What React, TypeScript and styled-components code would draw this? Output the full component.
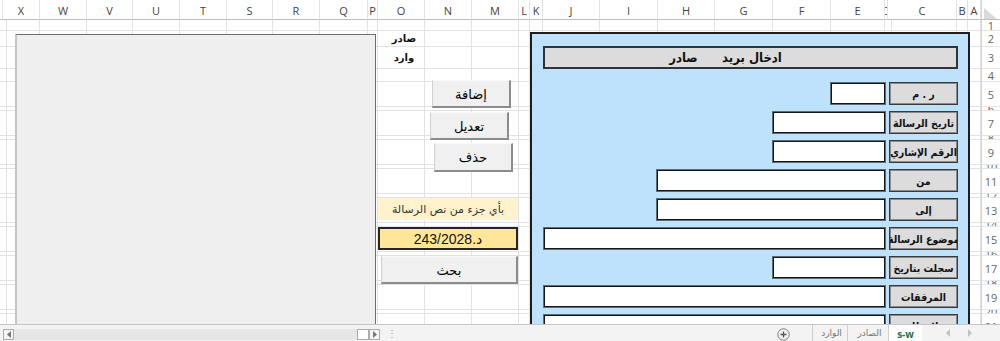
import styled, { createGlobalStyle } from "styled-components";

type Col = { name: string; w: number };

// Columns as they appear left to right (right-to-left sheet)
const COLS: Col[] = [
	{ name: "", w: 3 },
	{ name: "X", w: 37 },
	{ name: "W", w: 47 },
	{ name: "V", w: 46 },
	{ name: "U", w: 47 },
	{ name: "T", w: 47 },
	{ name: "S", w: 46 },
	{ name: "R", w: 47 },
	{ name: "Q", w: 48 },
	{ name: "P", w: 10 },
	{ name: "O", w: 47 },
	{ name: "N", w: 47 },
	{ name: "M", w: 47 },
	{ name: "L", w: 11 },
	{ name: "K", w: 13 },
	{ name: "J", w: 57 },
	{ name: "I", w: 58 },
	{ name: "H", w: 57 },
	{ name: "G", w: 58 },
	{ name: "F", w: 58 },
	{ name: "E", w: 54 },
	{ name: "D", w: 3 },
	{ name: "C", w: 69 },
	{ name: "B", w: 11 },
	{ name: "A", w: 13 },
];

const ROWS = [11, 16, 22, 13, 25, 4, 25, 4, 25, 4, 25, 4, 25, 4, 25, 4, 25, 4, 25, 4, 25];

const CELLS: Record<string, string> = {
	O2: "صادر",
	O3: "وارد",
};

const FIELDS = [
	{ label: "ر . م", w: 56 },
	{ label: "تاريخ الرسالة", w: 114 },
	{ label: "الرقم الإشاري", w: 114 },
	{ label: "من", w: 230 },
	{ label: "إلى", w: 230 },
	{ label: "موضوع الرسالة", w: 344 },
	{ label: "سجلت بتاريخ", w: 114 },
	{ label: "المرفقات", w: 344 },
	{ label: "ملاحظات", w: 344 },
];

const ARABIC = `"DejaVu Sans", sans-serif`;
const ARABIC_NARROW = `"DejaVu Sans Condensed", "DejaVu Sans", sans-serif`;
const UI = `"Open Sans", "Noto Sans", sans-serif`;

const GlobalStyle = createGlobalStyle`
	html, body {
		margin: 0;
		padding: 0;
		background: #ffffff;
		overflow: hidden;
	}
`;

function App() {
	return (
		<Window>
			<GlobalStyle />
			<HeaderRow>
				{COLS.map((c, i) => (
					<ColHeader key={i} $w={c.w}>
						{c.name}
					</ColHeader>
				))}
				<Corner>
					<svg width="19" height="20" viewBox="0 0 19 20">
						<polygon points="2,8 2,19 15,19" fill="#dadada" />
					</svg>
				</Corner>
			</HeaderRow>

			<Body>
				<Sheet>
					<Grid>
						{ROWS.map((h, r) =>
							COLS.map((c, ci) => {
								const key = `${c.name}${r + 1}`;
								return (
									<Cell key={`${r}-${ci}`} $bold={!!CELLS[key]}>
										{CELLS[key] ?? ""}
									</Cell>
								);
							})
						)}
					</Grid>

					<ListBox />

					<SheetButton $x={432} $y={60} $w={79} $h={28}>
						إضافة
					</SheetButton>
					<SheetButton $x={430} $y={92} $w={79} $h={28}>
						تعديل
					</SheetButton>
					<SheetButton $x={434} $y={123} $w={79} $h={29}>
						حذف
					</SheetButton>

					<SearchHint>بأي جزء من نص الرسالة</SearchHint>
					<SearchBox>د.243/2028</SearchBox>
					<SheetButton $x={381} $y={236} $w={137} $h={28}>
						بحث
					</SheetButton>

					<FormPanel>
						<FormTitle>{"ادخال بريد      صادر"}</FormTitle>
						<FieldList>
							{FIELDS.map((f) => (
								<FieldRow key={f.label}>
									<Input $w={f.w} />
									<FieldLabel>{f.label}</FieldLabel>
								</FieldRow>
							))}
						</FieldList>
					</FormPanel>
				</Sheet>

				<RowHeaders>
					{ROWS.map((h, r) => (
						<RowNumber key={r} $h={h}>
							{r + 1}
						</RowNumber>
					))}
				</RowHeaders>
			</Body>

			<BottomBar>
				<HScroll>
					<ScrollArrow>
						<svg width="6" height="7" viewBox="0 0 6 7">
							<polygon points="5,0 5,7 1,3.5" fill="#777" />
						</svg>
					</ScrollArrow>
					<Track />
					<Thumb />
					<ScrollArrow>
						<svg width="6" height="7" viewBox="0 0 6 7">
							<polygon points="1,0 1,7 5,3.5" fill="#777" />
						</svg>
					</ScrollArrow>
				</HScroll>
				<Grip>⋮</Grip>
				<TabArea>
					<AddSheet>
						<svg width="13" height="13" viewBox="0 0 13 13">
							<circle cx="6.5" cy="6.5" r="5.7" fill="none" stroke="#7a7a7a" strokeWidth="1" />
							<path d="M6.5 3.5v6M3.5 6.5h6" stroke="#555" strokeWidth="1.3" />
						</svg>
					</AddSheet>
					<Tab $w={35}>الوارد</Tab>
					<Tab $w={41}>الصادر</Tab>
					<ActiveTab>s-w</ActiveTab>
					<TabNav>
						<svg width="6" height="8" viewBox="0 0 6 8">
							<polygon points="5,0 5,8 1,4" fill="#c2c2c2" />
						</svg>
						<svg width="6" height="8" viewBox="0 0 6 8">
							<polygon points="1,0 1,8 5,4" fill="#c2c2c2" />
						</svg>
					</TabNav>
				</TabArea>
			</BottomBar>
		</Window>
	);
}

// Styled Components
const Window = styled.div`
	width: 1000px;
	height: 341px;
	display: flex;
	flex-direction: column;
	overflow: hidden;
	background: #fff;
`;

const HeaderRow = styled.div`
	display: flex;
	height: 20px;
	flex-shrink: 0;
`;

const ColHeader = styled.div<{ $w: number }>`
	width: ${(p) => p.$w}px;
	flex-shrink: 0;
	box-sizing: border-box;
	border-right: 1px solid #e3e3e3;
	border-bottom: 1px solid #bdbdbd;
	overflow: hidden;
	display: flex;
	align-items: center;
	justify-content: center;
	font: 11px ${UI};
	color: #444;
	padding-top: 2px;
`;

const Corner = styled.div`
	width: 19px;
	flex-shrink: 0;
	box-sizing: border-box;
	border-bottom: 1px solid #bdbdbd;
	border-left: 1px solid #d4d4d4;
	& svg {
		display: block;
	}
`;

const Body = styled.div`
	display: flex;
	height: 304px;
	flex-shrink: 0;
	overflow: hidden;
`;

const Sheet = styled.div`
	position: relative;
	width: 981px;
	flex-shrink: 0;
	overflow: hidden;
`;

const Grid = styled.div`
	display: grid;
	grid-template-columns: ${COLS.map((c) => `${c.w}px`).join(" ")};
	grid-template-rows: ${ROWS.map((h) => `${h}px`).join(" ")};
`;

const Cell = styled.div<{ $bold: boolean }>`
	box-sizing: border-box;
	border-right: 1px solid #e1e1e1;
	border-bottom: 1px solid #e1e1e1;
	overflow: visible;
	white-space: nowrap;
	display: flex;
	align-items: center;
	justify-content: center;
	direction: rtl;
	font: ${(p) => (p.$bold ? "bold" : "normal")} 10px ${ARABIC};
	color: #111;
	padding-left: 6px;
`;

const ListBox = styled.div`
	position: absolute;
	left: 15px;
	top: 14px;
	width: 361px;
	height: 310px;
	box-sizing: border-box;
	background: #efefef;
	border: 1px solid #6e6e6e;
	border-left: 2px solid #c4c4c4;
`;

const SheetButton = styled.div<{ $x: number; $y: number; $w: number; $h: number }>`
	position: absolute;
	left: ${(p) => p.$x}px;
	top: ${(p) => p.$y}px;
	width: ${(p) => p.$w}px;
	height: ${(p) => p.$h}px;
	box-sizing: border-box;
	background: #f0f0f0;
	border-top: 1px solid #f8f8f8;
	border-left: 1px solid #d0d0d0;
	border-right: 2px solid #8c8c8c;
	border-bottom: 2px solid #8c8c8c;
	display: flex;
	align-items: center;
	justify-content: center;
	direction: rtl;
	font: 13px ${ARABIC};
	color: #000;
	padding-top: 1px;
`;

const SearchHint = styled.div`
	position: absolute;
	left: 378px;
	top: 178px;
	width: 140px;
	height: 22px;
	background: #fff2cc;
	display: flex;
	align-items: center;
	justify-content: center;
	direction: rtl;
	font: 11px ${ARABIC};
	color: #333;
`;

const SearchBox = styled.div`
	position: absolute;
	left: 378px;
	top: 207px;
	width: 140px;
	height: 23px;
	box-sizing: border-box;
	background: #ffe699;
	border: 2px solid #262626;
	display: flex;
	align-items: center;
	justify-content: center;
	direction: rtl;
	font: 14px "Liberation Sans", ${ARABIC};
	color: #111;
`;

const FormPanel = styled.div`
	position: absolute;
	left: 530px;
	top: 12px;
	width: 440px;
	height: 300px;
	box-sizing: border-box;
	background: #bee2fb;
	border: 2px solid #1d1d1d;
	border-bottom: none;
	padding: 12px 10px 0 11px;
	display: flex;
	flex-direction: column;
	overflow: hidden;
`;

const FormTitle = styled.div`
	height: 23px;
	flex-shrink: 0;
	box-sizing: border-box;
	background: #dcdcdc;
	border: 2px solid #333;
	display: flex;
	align-items: center;
	justify-content: center;
	padding-right: 50px;
	direction: rtl;
	white-space: pre;
	font: bold 13px ${ARABIC_NARROW};
	color: #111;
	margin-bottom: 13px;
`;

const FieldList = styled.div`
	display: flex;
	flex-direction: column;
	gap: 6px;
`;

const FieldRow = styled.div`
	display: flex;
	justify-content: flex-end;
	align-items: stretch;
	gap: 3px;
	height: 23px;
	flex-shrink: 0;
`;

const Input = styled.div<{ $w: number }>`
	width: ${(p) => p.$w}px;
	box-sizing: border-box;
	background: #fff;
	border: 1px solid #5f6b77;
	box-shadow: inset 0 0 0 1px #151515;
`;

const FieldLabel = styled.div`
	width: 69px;
	box-sizing: border-box;
	background: #dcdcdc;
	border: 1px solid #3a3a3a;
	box-shadow: inset 0 0 0 1px #8a8a8a;
	display: flex;
	align-items: center;
	justify-content: center;
	direction: rtl;
	white-space: nowrap;
	overflow: hidden;
	font: bold 10.5px ${ARABIC_NARROW};
	color: #111;
`;

const RowHeaders = styled.div`
	width: 19px;
	flex-shrink: 0;
	box-sizing: border-box;
	border-left: 1px solid #d4d4d4;
	display: flex;
	flex-direction: column;
`;

const RowNumber = styled.div<{ $h: number }>`
	height: ${(p) => p.$h}px;
	flex-shrink: 0;
	box-sizing: border-box;
	border-bottom: 1px solid #e6e6e6;
	overflow: hidden;
	display: flex;
	align-items: center;
	justify-content: center;
	font: 11px ${UI};
	line-height: 11px;
	color: #666;
`;

const BottomBar = styled.div`
	height: 17px;
	flex-shrink: 0;
	box-sizing: border-box;
	border-top: 1px solid #c6c6c6;
	background: #f3f3f3;
	display: flex;
	align-items: center;
`;

const HScroll = styled.div`
	margin-left: 3px;
	width: 377px;
	height: 11px;
	margin-top: 2px;
	display: flex;
	background: #e6e6e6;
`;

const ScrollArrow = styled.div`
	width: 11px;
	height: 11px;
	box-sizing: border-box;
	border: 1px solid #acacac;
	background: #f5f5f5;
	display: flex;
	align-items: center;
	justify-content: center;
`;

const Track = styled.div`
	flex: 1;
`;

const Thumb = styled.div`
	width: 12px;
	box-sizing: border-box;
	border: 1px solid #acacac;
	background: #fff;
`;

const Grip = styled.div`
	width: 24px;
	text-align: center;
	font: 10px ${UI};
	color: #a0a0a0;
`;

const TabArea = styled.div`
	margin-left: auto;
	display: flex;
	align-items: stretch;
	height: 100%;
`;

const AddSheet = styled.div`
	width: 35px;
	display: flex;
	align-items: center;
	justify-content: flex-start;
	border-right: 1px solid #cfcfcf;
	& svg {
		margin-top: 2px;
	}
`;

const Tab = styled.div<{ $w: number }>`
	width: ${(p) => p.$w}px;
	box-sizing: border-box;
	border-right: 1px solid #cfcfcf;
	display: flex;
	align-items: center;
	justify-content: center;
	direction: rtl;
	font: 9px ${ARABIC};
	color: #777;
	padding-left: 3px;
`;

const ActiveTab = styled.div`
	width: 33px;
	background: #fff;
	display: flex;
	align-items: center;
	justify-content: center;
	font: bold 10px ${UI};
	color: #217346;
	padding-top: 1px;
`;

const TabNav = styled.div`
	width: 74px;
	display: flex;
	align-items: center;
	justify-content: center;
	gap: 16px;
	padding-right: 4px;
`;

export default App;
